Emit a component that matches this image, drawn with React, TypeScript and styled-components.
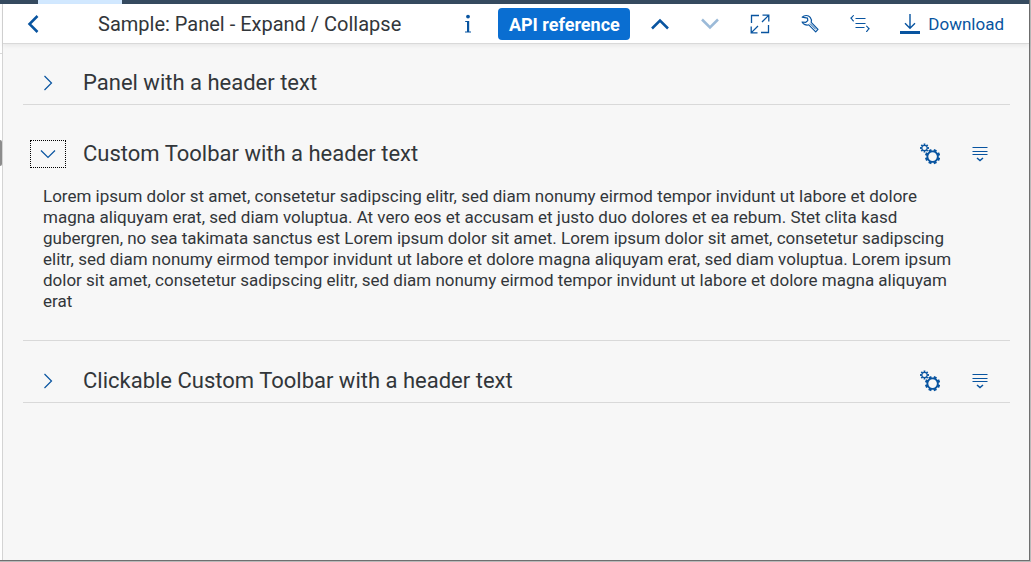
import React, { useState } from "react";
import styled, { createGlobalStyle } from "styled-components";

const GlobalStyle = createGlobalStyle`
  * { box-sizing: border-box; }
  body {
    margin: 0;
    background: #fff;
    color: #32363a;
    font-family: Roboto, "Liberation Sans", sans-serif;
  }
  button, a { font-family: inherit; }
`;

const Frame = styled.div`
  min-height: 100vh;
  display: flex;
  flex-direction: column;
  border-right: 1px solid #b9b9b9;
  border-bottom: 1px solid #b9b9b9;
`;

const Window = styled.div`
  flex: 1;
  display: flex;
  flex-direction: column;
  border-right: 1px solid #6f6f6f;
  border-bottom: 1px solid #6f6f6f;
`;

const ShellStrip = styled.div`
  height: 4px;
  padding-left: 38px;
  background: #354a5f;
`;

const ActiveTab = styled.div`
  width: 84px;
  height: 4px;
  background: #d1e8ff;
`;

const Body = styled.div`
  flex: 1;
  display: flex;
`;

const Rail = styled.div`
  width: 3px;
  border-right: 1px solid #d4d4d4;
`;

const RailHeader = styled.div`
  height: 50px;
  border-bottom: 1px solid #d9d9d9;
`;

const RailGrip = styled.div`
  height: 26px;
  margin-top: 86px;
  background: #8c8c8c;
  border-radius: 0 2px 2px 0;
`;

const Main = styled.main`
  flex: 1;
  min-width: 0;
  background: #f7f7f7;
`;

const Toolbar = styled.header`
  display: flex;
  align-items: center;
  height: 40px;
  padding: 1px 25px 0 12px;
  background: #fff;
  border-bottom: 1px solid #d9d9d9;
  box-shadow: 0 2px 4px rgba(0, 0, 0, 0.06);
`;

const IconButton = styled.button`
  display: inline-flex;
  align-items: center;
  justify-content: center;
  flex: none;
  width: 36px;
  height: 28px;
  padding: 0;
  border: 0;
  background: transparent;
  color: #0854a0;
  cursor: pointer;
  &:disabled { opacity: 0.4; cursor: default; }
  svg { display: block; }
`;

const Title = styled.h1`
  flex: 1;
  margin: 0 0 0 47px;
  font-size: 20px;
  line-height: 24px;
  font-weight: 400;
  white-space: nowrap;
`;

const Actions = styled.div`
  display: flex;
  align-items: center;
  gap: 14px;
`;

const ApiButton = styled.button`
  width: 132px;
  height: 32px;
  margin: 0 -2px;
  padding: 0;
  border: 0;
  border-radius: 4px;
  background: #0a6ed1;
  color: #fff;
  font-size: 18px;
  font-weight: 700;
  white-space: nowrap;
  cursor: pointer;
`;

const DownloadLink = styled.a`
  display: inline-flex;
  align-items: center;
  gap: 8px;
  margin-left: 8px;
  color: #0854a0;
  font-size: 17px;
  line-height: 24px;
  text-decoration: none;
`;

const Content = styled.div`
  padding: 16px 19px 16px 20px;
`;

const Panel = styled.section<{ $gap: number }>`
  margin-bottom: ${(p) => p.$gap}px;
  border-bottom: 1px solid #d9d9d9;
`;

const PanelHeader = styled.div`
  display: flex;
  align-items: center;
  height: 44px;
  padding: 2px 12px 0 7px;
`;

const Toggle = styled(IconButton)<{ $focused: boolean }>`
  border: 1px dotted ${(p) => (p.$focused ? "#000" : "transparent")};
  outline: none;
`;

const PanelTitle = styled.h2`
  flex: 1;
  margin: 0 0 0 17px;
  font-size: 22px;
  line-height: 28px;
  font-weight: 400;
`;

const PanelText = styled.p`
  margin: 0;
  padding: 11px 47px 28px 20px;
  font-size: 17px;
  line-height: 21px;
`;

const Chevron = ({ d, w, h, stroke }: { d: string; w: number; h: number; stroke: number }) => (
  <svg width={w} height={h} viewBox={`0 0 ${w} ${h}`} fill="none" stroke="currentColor" strokeWidth={stroke} aria-hidden="true">
    <path d={d} />
  </svg>
);

const InfoIcon = () => (
  <svg width="8" height="20" viewBox="0 0 8 20" fill="currentColor" aria-hidden="true">
    <circle cx="4" cy="2.6" r="1.9" />
    <path d="M1.200 7h4v10.600H7v1H1v-1h2V8H1.200z" />
  </svg>
);

const FullScreenIcon = () => (
  <svg width="20" height="20" viewBox="0 0 20 20" fill="none" stroke="currentColor" strokeWidth="1.3" aria-hidden="true">
    <path d="M1.5 9V1.5H9M18.5 11v7.5H11M12 8l6.4-6.4M12.5 1.2h6.3v6.3M8 12l-6.4 6.4M1.2 12.5v6.3h6.3" />
  </svg>
);

const WrenchIcon = () => (
  <svg width="20" height="20" viewBox="0 0 20 20" fill="none" stroke="currentColor" strokeWidth="1.2" strokeLinejoin="round" aria-hidden="true">
    <path d="M2.2 3.2C4.5.8 8.3 1 10.2 3.4c1.2 1.5 1.5 3.3 1 5l6.8 7-2.3 2.4-6.9-7c-2.4.8-5.5-.2-6.7-2.8l3.7.3 2-1.7-.3-2.4z" />
    <path d="M10 9.5l5.8 5.9" strokeWidth="1" />
  </svg>
);

const SourceIcon = () => (
  <svg width="22" height="20" viewBox="0 0 22 20" fill="none" stroke="currentColor" strokeWidth="1.2" aria-hidden="true">
    <path d="M5 1.500C3 1.500 3.600 4 1.500 4.200 3.600 4.400 3 7 5 7M17 12c2 0 1.400 2.500 3.500 2.700C18.400 14.900 19 17.500 17 17.500M6.500 4.500h10M6.500 9.500h10M6.500 13.500h9" />
  </svg>
);

const DownloadIcon = () => (
  <svg width="20" height="20" viewBox="0 0 20 20" fill="none" stroke="currentColor" strokeWidth="1.4" aria-hidden="true">
    <path d="M10 0v14M5 9.200l5 5 5-5" />
    <path d="M0 18.500h20" strokeWidth="3" />
  </svg>
);

const gear = (cx: number, cy: number, root: number, tip: number, phase = 0) => {
  const points: string[] = [];
  for (let i = 0; i < 8; i++) {
    const base = (i * Math.PI) / 4 + phase;
    [[-0.24, root], [-0.2, tip], [0.2, tip], [0.24, root]].forEach(([a, r]) => {
      points.push(`${(cx + r * Math.cos(base + a)).toFixed(2)} ${(cy + r * Math.sin(base + a)).toFixed(2)}`);
    });
  }
  return `M${points.join("L")}Z`;
};

const ring = (cx: number, cy: number, r: number) =>
  `M${cx - r} ${cy}a${r} ${r} 0 1 0 ${2 * r} 0a${r} ${r} 0 1 0 ${-2 * r} 0Z`;

const SettingsIcon = () => (
  <svg width="20" height="22" viewBox="0 0 20 22" fill="currentColor" fillRule="evenodd" aria-hidden="true">
    <path d={gear(4.5, 5, 3.3, 4.6) + ring(4.5, 5, 2.1)} />
    <path d={gear(12.6, 13.6, 6.2, 7.8, Math.PI / 8) + ring(12.6, 13.6, 4.3)} />
  </svg>
);

const OverflowIcon = () => (
  <svg width="16" height="16" viewBox="0 0 16 16" fill="none" stroke="currentColor" strokeWidth="1.2" aria-hidden="true">
    <path d="M.5 1.500h15M.5 5.500h15M.5 8.500h15" />
    <path d="M5 12l3 2.500 3-2.500" strokeWidth="1.500" />
  </svg>
);

const LOREM =
  "Lorem ipsum dolor st amet, consetetur sadipscing elitr, sed diam nonumy eirmod tempor invidunt ut labore et dolore magna aliquyam erat, sed diam voluptua. At vero eos et accusam et justo duo dolores et ea rebum. Stet clita kasd gubergren, no sea takimata sanctus est Lorem ipsum dolor sit amet. Lorem ipsum dolor sit amet, consetetur sadipscing elitr, sed diam nonumy eirmod tempor invidunt ut labore et dolore magna aliquyam erat, sed diam voluptua. Lorem ipsum dolor sit amet, consetetur sadipscing elitr, sed diam nonumy eirmod tempor invidunt ut labore et dolore magna aliquyam erat";

const PANELS = [
  { title: "Panel with a header text", tools: false, gap: 26 },
  { title: "Custom Toolbar with a header text", tools: true, gap: 17 },
  { title: "Clickable Custom Toolbar with a header text", tools: true, gap: 17 },
];

export default function App() {
  const [open, setOpen] = useState([false, true, false]);
  const [focused, setFocused] = useState(1);

  const toggle = (index: number) => {
    setOpen(open.map((value, i) => (i === index ? !value : value)));
    setFocused(index);
  };

  return (
    <>
      <GlobalStyle />
      <Frame>
        <Window>
          <ShellStrip>
            <ActiveTab />
          </ShellStrip>
          <Body>
            <Rail>
              <RailHeader />
              <RailGrip />
            </Rail>
            <Main>
              <Toolbar>
                <IconButton aria-label="Back">
                  <Chevron w={12} h={18} stroke={2.5} d="M10.500 1L2.500 9l8 8" />
                </IconButton>
                <Title>Sample: Panel - Expand / Collapse</Title>
                <Actions>
                  <IconButton aria-label="Information"><InfoIcon /></IconButton>
                  <ApiButton>API reference</ApiButton>
                  <IconButton aria-label="Previous sample">
                    <Chevron w={18} h={12} stroke={2.5} d="M1 10.500L9 2.500l8 8" />
                  </IconButton>
                  <IconButton aria-label="Next sample" disabled>
                    <Chevron w={18} h={12} stroke={2.5} d="M1 1.500l8 8 8-8" />
                  </IconButton>
                  <IconButton aria-label="Full screen"><FullScreenIcon /></IconButton>
                  <IconButton aria-label="Settings"><WrenchIcon /></IconButton>
                  <IconButton aria-label="Show code"><SourceIcon /></IconButton>
                  <DownloadLink href="#download">
                    <DownloadIcon />
                    Download
                  </DownloadLink>
                </Actions>
              </Toolbar>
              <Content>
                {PANELS.map((panel, i) => (
                  <Panel key={panel.title} $gap={panel.gap}>
                    <PanelHeader>
                      <Toggle
                        $focused={focused === i}
                        aria-label={panel.title}
                        aria-expanded={open[i]}
                        onClick={() => toggle(i)}
                      >
                        {open[i] ? (
                          <Chevron w={16} h={10} stroke={1.2} d="M1 1.500l7 7 7-7" />
                        ) : (
                          <Chevron w={10} h={16} stroke={1.2} d="M1.500 1l7 7-7 7" />
                        )}
                      </Toggle>
                      <PanelTitle>{panel.title}</PanelTitle>
                      {panel.tools && (
                        <Actions>
                          <IconButton aria-label="Action settings"><SettingsIcon /></IconButton>
                          <IconButton aria-label="More"><OverflowIcon /></IconButton>
                        </Actions>
                      )}
                    </PanelHeader>
                    {open[i] && <PanelText>{LOREM}</PanelText>}
                  </Panel>
                ))}
              </Content>
            </Main>
          </Body>
        </Window>
      </Frame>
    </>
  );
}
